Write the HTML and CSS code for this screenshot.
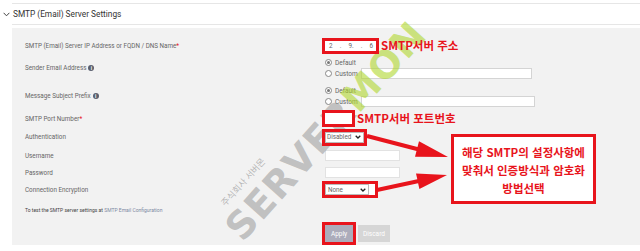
FILE: index.html
```html
<!DOCTYPE html>
<html lang="ko">
<head>
  <meta charset="UTF-8" />
  <title>SMTP (Email) Server Settings</title>
  <link rel="stylesheet" href="styles.css">
</head>
<body>
  <div class="page">
    <div class="section">
      <div class="section-head">
        <svg class="chev" width="7" height="5" viewBox="0 0 7 5"><path d="M0.6 0.8 L3.5 3.8 L6.4 0.8" fill="none" stroke="#444" stroke-width="1"/></svg>
        <span>SMTP (Email) Server Settings</span>
      </div>

      <div class="panel">
        <div class="row r-ip">
          <div class="label">SMTP (Email) Server IP Address or FQDN / DNS Name<span class="req">*</span></div>
          <div class="field">
            <div class="mark">
              <div class="ip"><span>2</span><i>.</i><span>9.</span><i>.</i><span>6</span></div>
            </div>
            <span class="red-note">SMTP서버 주소</span>
          </div>
        </div>

        <div class="row r-radio">
          <div class="label">Sender Email Address <span class="info">i</span></div>
          <div class="radio-group">
            <div class="radio-line"><span class="radio on"></span>Default</div>
            <div class="radio-line"><span class="radio"></span>Custom<span class="text-input wide"></span></div>
          </div>
        </div>

        <div class="row r-radio">
          <div class="label">Message Subject Prefix <span class="info">i</span></div>
          <div class="radio-group">
            <div class="radio-line"><span class="radio on"></span>Default</div>
            <div class="radio-line"><span class="radio"></span>Custom<span class="text-input wider"></span></div>
          </div>
        </div>

        <div class="row r-port">
          <div class="label">SMTP Port Number<span class="req">*</span></div>
          <div class="field">
            <div class="mark"><div class="port"></div></div>
            <span class="red-note">SMTP서버 포트번호</span>
          </div>
        </div>

        <div class="row r-auth">
          <div class="label">Authentication</div>
          <div class="field">
            <div class="mark">
              <div class="select sel-auth">Disabled<svg width="6" height="4" viewBox="0 0 6 4"><path d="M0.7 0.7 L3 3 L5.3 0.7" fill="none" stroke="#222" stroke-width="1.3"/></svg></div>
            </div>
          </div>
        </div>

        <div class="row r-user">
          <div class="label">Username</div>
          <div class="field"><span class="text-input short"></span></div>
        </div>

        <div class="row r-pass">
          <div class="label">Password</div>
          <div class="field"><span class="text-input short"></span></div>
        </div>

        <div class="row r-enc">
          <div class="label">Connection Encryption</div>
          <div class="field">
            <div class="mark">
              <div class="select sel-enc">None<svg width="6" height="4" viewBox="0 0 6 4"><path d="M0.7 0.7 L3 3 L5.3 0.7" fill="none" stroke="#222" stroke-width="1.3"/></svg></div>
            </div>
          </div>
        </div>

        <div class="row r-note">
          <div class="small-note">To test the SMTP server settings at <span class="link">SMTP Email Configuration</span></div>
        </div>

        <div class="row r-btn">
          <div class="label"></div>
          <div class="field">
            <div class="mark"><div class="btn apply">Apply</div></div>
            <div class="btn discard">Discard</div>
          </div>
        </div>
      </div>
    </div>

    <!-- watermark -->
    <div class="watermark"><span class="wm-gray">SERVER</span><span class="wm-green">MON</span></div>
    <div class="wm-small">주식회사 서버몬</div>

    <!-- annotation arrows -->
    <svg class="arrows" width="640" height="251" viewBox="0 0 640 251">
      <polygon fill="#e8141c" points="367.5,134.1 417.5,147.1 419,141.3 448,157 415,156.7 416.5,150.9 366.5,137.9"/>
      <polygon fill="#e8141c" points="376.6,188 417.3,179.3 416,173.5 447,175 419.4,189.1 418.1,183.3 377.4,192"/>
    </svg>

    <div class="callout">
      <p>해당 SMTP의 설정사항에</p>
      <p>맞춰서 인증방식과 암호화</p>
      <p>방법선택</p>
    </div>
  </div>
</body>
</html>
```

FILE: styles.css
```css
body {
  margin: 0;
  background: #fff;
  font-family: Roboto, "Liberation Sans", sans-serif;
  color: #555;
  overflow: hidden;
}

.page {
  position: relative;
  width: 640px;
  height: 251px;
  padding-top: 3px;
  box-sizing: border-box;
}

.section {
  margin-left: 12px;
}

.section-head {
  display: flex;
  align-items: center;
  height: 20px;
  border-top: 1px solid #e6e6e6;
  border-bottom: 1px solid #e6e6e6;
  font-size: 8.3px;
  color: #333;
}

.chev {
  margin-left: -9px;
  margin-right: 3px;
}

.panel {
  margin-top: 3px;
  background: #f2f2f2;
  height: 217px;
  padding: 10px 0 0 13px;
  box-sizing: border-box;
}

.row {
  display: flex;
  align-items: center;
}

.r-ip { height: 16px; }
.r-radio { height: 28px; }
.r-port { height: 17px; }
.r-auth { height: 20px; }
.r-user { height: 17px; }
.r-pass { height: 17px; }
.r-enc { height: 17px; }
.r-note { height: 24px; }
.r-btn { height: 23px; }

.label {
  width: 297px;
  flex: none;
  font-size: 6.3px;
  color: #666;
  display: flex;
  align-items: center;
}

.req {
  color: #e8141c;
}

.info {
  display: inline-flex;
  align-items: center;
  justify-content: center;
  width: 6px;
  height: 6px;
  margin-left: 2px;
  border-radius: 50%;
  background: #5a5f6e;
  color: #fff;
  font-size: 5px;
  font-weight: bold;
}

.field {
  display: flex;
  align-items: center;
}

/* red highlight boxes sit above the watermark */
.mark {
  position: relative;
  z-index: 2;
  border: 3px solid #e8141c;
  background: #fff;
  display: flex;
}

.ip {
  display: flex;
  align-items: center;
  justify-content: space-between;
  width: 44px;
  height: 10px;
  padding: 0 3px 0 4px;
  font-size: 6.3px;
  color: #666;
}

.ip i {
  font-style: normal;
  color: #888;
}

.red-note {
  position: relative;
  z-index: 2;
  margin-left: 2px;
  font-family: "Noto Sans CJK KR", sans-serif;
  font-weight: bold;
  font-size: 11.5px;
  line-height: 1;
  color: #e8141c;
}

.radio-group {
  display: flex;
  flex-direction: column;
  padding-left: 3px;
}

.radio-line {
  display: flex;
  align-items: center;
  height: 11px;
  font-size: 6.5px;
  color: #666;
}

.radio {
  width: 5px;
  height: 5px;
  border: 1px solid #888;
  border-radius: 50%;
  background: #fff;
  margin-right: 3px;
  position: relative;
}

.radio.on::after {
  content: "";
  position: absolute;
  left: 1px;
  top: 1px;
  width: 3px;
  height: 3px;
  border-radius: 50%;
  background: #777;
}

.text-input {
  display: block;
  height: 11px;
  background: #fff;
  border: 1px solid #d4d4d4;
  box-sizing: border-box;
}

.text-input.wide {
  width: 171px;
  margin-left: 3px;
}

.text-input.wider {
  width: 174px;
  margin-left: 3px;
}

.text-input.short {
  width: 75px;
  margin-left: 3px;
  border-color: #e2e2e2;
}

.port {
  width: 27px;
  height: 11px;
}

.select {
  display: flex;
  align-items: center;
  justify-content: space-between;
  height: 9px;
  padding: 0 2px 0 1px;
  border: 1px solid #bbb;
  font-size: 6.3px;
  color: #666;
}

.sel-auth {
  width: 34px;
}

.sel-enc {
  width: 38px;
  margin-right: 6px;
  padding-left: 2px;
}

.small-note {
  font-size: 5px;
  color: #444;
}

.small-note .link {
  color: #7d8aa3;
}

.btn {
  display: flex;
  align-items: center;
  justify-content: center;
  height: 17px;
  font-size: 6.5px;
  color: #fff;
}

.apply {
  width: 28px;
  background: #acacbb;
}

.discard {
  width: 32px;
  margin-left: 2px;
  background: #d6d6d6;
}

.watermark {
  position: absolute;
  z-index: 1;
  left: 326px;
  top: 131px;
  transform: translate(-50%, -50%) rotate(-48deg);
  font-family: "DejaVu Sans", sans-serif;
  font-weight: bold;
  font-size: 38px;
  letter-spacing: 1px;
  white-space: nowrap;
  pointer-events: none;
}

.wm-gray {
  color: rgba(150, 150, 150, 0.55);
}

.wm-green {
  color: rgba(175, 215, 45, 0.6);
}

.wm-small {
  position: absolute;
  z-index: 1;
  left: 243px;
  top: 182px;
  transform: translate(-50%, -50%) rotate(-48deg);
  font-family: "Noto Sans CJK KR", sans-serif;
  font-size: 9px;
  color: rgba(140, 140, 140, 0.6);
  white-space: nowrap;
  pointer-events: none;
}

.arrows {
  position: absolute;
  z-index: 3;
  left: 0;
  top: 0;
  pointer-events: none;
}

.callout {
  position: absolute;
  z-index: 3;
  left: 451px;
  top: 134px;
  width: 145px;
  height: 70px;
  box-sizing: border-box;
  border: 3px solid #e8141c;
  background: #fff;
  padding-top: 6px;
  text-align: center;
  font-family: "Noto Sans CJK KR", sans-serif;
  font-weight: bold;
  font-size: 11.5px;
  color: #e8141c;
}

.callout p {
  margin: 0;
  height: 18px;
  line-height: 18px;
}
```
